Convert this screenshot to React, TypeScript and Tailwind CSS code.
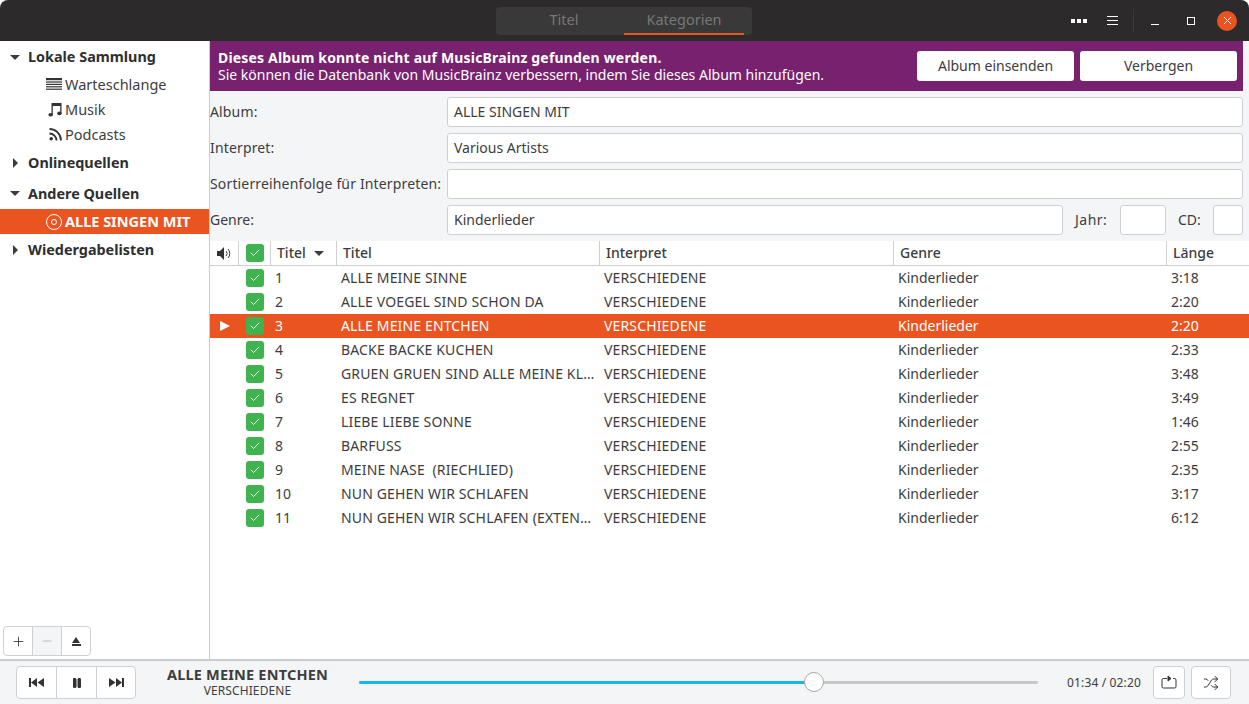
import { Check, Minus, Pause, Plus, Shuffle, X } from 'lucide-react';

const tracks = [
  ['1', 'ALLE MEINE SINNE', '3:18'],
  ['2', 'ALLE VOEGEL SIND SCHON DA', '2:20'],
  ['3', 'ALLE MEINE ENTCHEN', '2:20'],
  ['4', 'BACKE BACKE KUCHEN', '2:33'],
  ['5', 'GRUEN GRUEN SIND ALLE MEINE KL…', '3:48'],
  ['6', 'ES REGNET', '3:49'],
  ['7', 'LIEBE LIEBE SONNE', '1:46'],
  ['8', 'BARFUSS', '2:55'],
  ['9', 'MEINE NASE  (RIECHLIED)', '2:35'],
  ['10', 'NUN GEHEN WIR SCHLAFEN', '3:17'],
  ['11', 'NUN GEHEN WIR SCHLAFEN (EXTEN…', '6:12'],
];

const gridCols = 'grid grid-cols-[29px_32px_66px_263px_294px_273px_82px]';

function CheckBox() {
  return (
    <span className="flex h-[18px] w-[18px] items-center justify-center rounded-[3px] bg-[#3eb34f]">
      <Check className="h-3 w-3 text-white" strokeWidth={1.75} />
    </span>
  );
}

function Arrow({ open }: { open: boolean }) {
  return open ? (
    <span className="flex w-[28px] shrink-0 pl-[10px]">
      <span className="h-0 w-0 border-x-[5px] border-t-[5px] border-x-transparent border-t-[#3d3d3d]" />
    </span>
  ) : (
    <span className="flex w-[28px] shrink-0 pl-[13px]">
      <span className="h-0 w-0 border-y-[5px] border-l-[5.5px] border-y-transparent border-l-[#3d3d3d]" />
    </span>
  );
}

function SourceHead({ label, open, className }: { label: string; open: boolean; className: string }) {
  return (
    <div className={`flex items-center text-[14.4px] font-bold text-[#2f2f2f] ${className}`}>
      <Arrow open={open} />
      {label}
    </div>
  );
}

function SourceItem({ label, icon }: { label: string; icon: React.ReactNode }) {
  return (
    <div className="flex h-[25px] items-center text-[14.5px] text-[#3d3d3d]">
      <span className="flex w-[65px] shrink-0 justify-end pr-[3px]">{icon}</span>
      {label}
    </div>
  );
}

function Field({ label, value }: { label: string; value: string }) {
  return (
    <div className="flex h-[30px] items-center">
      <span className="w-[237px] shrink-0 whitespace-nowrap pb-[2px] tracking-[0.15px]">{label}</span>
      <div className="flex h-full flex-1 items-center rounded-[3px] border border-[#cdd1d6] bg-white px-[6px] pb-[2px]">{value}</div>
    </div>
  );
}

function HeadCell({ children, className = '' }: { children?: React.ReactNode; className?: string }) {
  return (
    <div className={`flex items-center border-r border-[#cdd1d6] font-medium text-[#3d3d3d] ${className}`}>
      {children}
    </div>
  );
}

function Transport({ children, className = '' }: { children: React.ReactNode; className?: string }) {
  return (
    <div className={`flex h-[33px] items-center justify-center border border-[#cdd1d6] bg-white text-[#333] ${className}`}>
      {children}
    </div>
  );
}

export default function App() {
  return (
    <div className="flex h-[704px] w-[1249px] flex-col overflow-hidden bg-white font-['Noto_Sans',sans-serif] text-[14px] text-[#3d3d3d]">
      {/* title bar */}
      <header className="relative flex h-[41px] shrink-0 items-center rounded-t-[8px] bg-[#2c2a2b] pl-[496px]">
        <div className="flex h-[28px] w-[256px] rounded-[4px] bg-[#393939] text-[14.5px] text-[#777]">
          <div className="flex w-[128px] items-center justify-center pl-[8px] pb-[2px]">Titel</div>
          <div className="flex w-[120px] items-center justify-center border-b-2 border-[#e95420]">Kategorien</div>
        </div>
        <div className="absolute right-[12px] top-0 flex h-full items-center text-white">
          <span className="flex gap-[2px]">
            <i className="h-[4px] w-[4px] bg-white" />
            <i className="h-[4px] w-[4px] bg-white" />
            <i className="h-[4px] w-[4px] bg-white" />
          </span>
          <span className="ml-[20px] flex w-[11px] flex-col gap-[3px]">
            <i className="h-px bg-white" />
            <i className="h-px bg-white" />
            <i className="h-px bg-white" />
          </span>
          <span className="ml-[15px] h-[24px] w-px bg-[#3b3a3a]" />
          <span className="ml-[17px] mt-[8px] h-px w-[8px] bg-white" />
          <span className="ml-[28px] h-[8px] w-[8px] border border-white" />
          <span className="ml-[22px] flex h-[20px] w-[20px] items-center justify-center rounded-full bg-[#e95420]">
            <X className="h-[13px] w-[13px]" strokeWidth={1.75} />
          </span>
        </div>
      </header>

      <div className="flex min-h-0 flex-1">
        {/* sources */}
        <aside className="flex w-[210px] shrink-0 flex-col border-r border-[#c8cbd0] bg-white pt-[4px]">
          <SourceHead label="Lokale Sammlung" open className="h-[24px]" />
          <div className="mt-[3px]">
            <SourceItem
              label="Warteschlange"
              icon={
                <svg width="16" height="13" viewBox="0 0 16 13" fill="#333">
                  <rect y="0" width="16" height="2.200" />
                  <rect y="3.400" width="16" height="1.200" />
                  <rect y="5.800" width="16" height="1.200" />
                  <rect y="8.200" width="16" height="1.200" />
                  <rect y="10.600" width="16" height="1.200" />
                </svg>
              }
            />
            <SourceItem
              label="Musik"
              icon={
                <svg width="14" height="15" viewBox="0 0 14 15" fill="#333">
                  <path d="M3.500 1h10v10.500h-1.300V4H4.800v9h-1.300zM3.500 1" />
                  <ellipse cx="2.700" cy="12.700" rx="2.300" ry="1.800" />
                  <ellipse cx="11.400" cy="11.400" rx="2.300" ry="1.800" />
                </svg>
              }
            />
            <SourceItem
              label="Podcasts"
              icon={
                <svg width="13" height="13" viewBox="0 0 13 13" fill="none" stroke="#333" strokeWidth="1.800">
                  <circle cx="2.200" cy="10.800" r="1.800" fill="#333" stroke="none" />
                  <path d="M0.500 5.500a7 7 0 0 1 7 7" />
                  <path d="M0.500 1a11.500 11.500 0 0 1 11.500 11.500" />
                </svg>
              }
            />
          </div>
          <SourceHead label="Onlinequellen" open={false} className="h-[31px]" />
          <SourceHead label="Andere Quellen" open className="h-[31px]" />
          <div className="flex h-[25px] items-center bg-[#e95420] text-[14.5px] font-bold text-white">
            <span className="flex w-[65px] shrink-0 justify-end pr-[3px]">
              <span className="flex h-[16px] w-[16px] items-center justify-center rounded-full border border-white">
                <span className="h-[6px] w-[6px] rounded-full border border-white" />
              </span>
            </span>
            ALLE SINGEN MIT
          </div>
          <SourceHead label="Wiedergabelisten" open={false} className="mt-[3px] h-[25px]" />
          <div className="mb-[3px] ml-[3px] mt-auto flex h-[30px] w-[88px] overflow-hidden rounded-[4px] border border-[#cdd1d6]">
            <div className="flex w-[29px] items-center justify-center border-r border-[#cdd1d6]">
              <Plus className="h-[15px] w-[15px] text-[#222]" strokeWidth={1.25} />
            </div>
            <div className="flex w-[29px] items-center justify-center border-r border-[#cdd1d6] bg-[#f4f5f7]">
              <Minus className="h-[14px] w-[14px] text-[#aaa]" strokeWidth={1.25} />
            </div>
            <div className="flex flex-1 flex-col items-center justify-center gap-[1px]">
              <span className="h-0 w-0 border-x-[4.5px] border-b-[6px] border-x-transparent border-b-[#333]" />
              <span className="h-[2px] w-[9px] bg-[#333]" />
            </div>
          </div>
        </aside>

        {/* album editor */}
        <main className="flex min-w-0 flex-1 flex-col bg-white">
          <div className="bg-[#f4f5f7]">
            <div className="mr-[6px] flex h-[50px] items-center justify-between bg-[#77216f] pl-[8px] pr-[6px] text-white">
              <div className="leading-[17px]">
                <p className="font-bold tracking-[0.18px]">Dieses Album konnte nicht auf MusicBrainz gefunden werden.</p>
                <p>Sie können die Datenbank von MusicBrainz verbessern, indem Sie dieses Album hinzufügen.</p>
              </div>
              <div className="flex gap-[6px] text-[#3d3d3d]">
                <div className="flex h-[30px] w-[157px] items-center justify-center rounded-[3px] bg-white pb-[2px]">Album einsenden</div>
                <div className="flex h-[30px] w-[157px] items-center justify-center rounded-[3px] bg-white pb-[2px]">Verbergen</div>
              </div>
            </div>
            <div className="flex flex-col gap-[6px] py-[6px] pr-[6px]">
              <Field label="Album:" value="ALLE SINGEN MIT" />
              <Field label="Interpret:" value="Various Artists" />
              <Field label="Sortierreihenfolge für Interpreten:" value="" />
              <div className="flex h-[30px] items-center">
                <span className="w-[237px] shrink-0 pb-[2px]">Genre:</span>
                <div className="flex h-full w-[616px] items-center rounded-[3px] border border-[#cdd1d6] bg-white px-[6px] pb-[2px]">Kinderlieder</div>
                <span className="ml-[12px] w-[45px] pb-[2px] tracking-[0.5px]">Jahr:</span>
                <div className="h-full w-[46px] rounded-[3px] border border-[#cdd1d6] bg-white" />
                <span className="ml-[12px] w-[35px] pb-[2px]">CD:</span>
                <div className="h-full w-[30px] rounded-[3px] border border-[#cdd1d6] bg-white" />
              </div>
            </div>
          </div>

          <div className={`${gridCols} h-[25px] shrink-0 border-b border-[#cdd1d6]`}>
            <HeadCell className="justify-center">
              <svg width="15" height="13" viewBox="0 0 15 13" fill="none" stroke="#333" strokeWidth="1">
                <path d="M0 4h3l4-4v13l-4-4H0z" fill="#333" stroke="none" />
                <path d="M9 4a3.500 3.500 0 0 1 0 5" />
                <path d="M11 2a6.500 6.500 0 0 1 0 9" />
              </svg>
            </HeadCell>
            <HeadCell className="justify-center">
              <CheckBox />
            </HeadCell>
            <HeadCell className="pl-[6px] pb-[2px]">
              Titel
              <span className="ml-[8px] mt-[3px] h-0 w-0 border-x-[5px] border-t-[5px] border-x-transparent border-t-[#3d3d3d]" />
            </HeadCell>
            <HeadCell className="pl-[6px] pb-[2px]">Titel</HeadCell>
            <HeadCell className="pl-[6px] pb-[2px]">Interpret</HeadCell>
            <HeadCell className="pl-[6px] pb-[2px]">Genre</HeadCell>
            <div className="flex items-center pb-[2px] pl-[6px] font-medium">Länge</div>
          </div>

          {tracks.map(([nr, title, length]) => {
            const playing = nr === '3';
            return (
              <div
                key={nr}
                className={`${gridCols} h-[24px] shrink-0 items-center ${playing ? 'bg-[#e95420] text-white' : 'text-[#3d3d3d]'}`}
              >
                <div className="flex justify-center">
                  {playing && <span className="h-0 w-0 border-y-[5.5px] border-l-[10px] border-y-transparent border-l-white" />}
                </div>
                <div className="flex justify-center">
                  <CheckBox />
                </div>
                <div className="pb-[2px] pl-[4px]">{nr}</div>
                <div className="overflow-hidden whitespace-pre pb-[2px] pl-[4px] tracking-[0.15px]">{title}</div>
                <div className="pb-[2px] pl-[4px] tracking-[0.15px]">VERSCHIEDENE</div>
                <div className="pb-[2px] pl-[4px]">Kinderlieder</div>
                <div className="pb-[2px] pl-[4px]">{length}</div>
              </div>
            );
          })}
        </main>
      </div>

      {/* player */}
      <footer className="flex h-[45px] shrink-0 items-center border-t-2 border-[#c8cbd0] bg-[#f4f5f7]">
        <div className="ml-[16px] flex w-[120px]">
          <Transport className="w-[41px] rounded-l-[4px]">
            <svg width="15" height="9" viewBox="0 0 15 9" fill="currentColor">
              <rect width="2" height="9" />
              <path d="M8 0v9L2 4.500zM15 0v9L8.500 4.500z" />
            </svg>
          </Transport>
          <Transport className="-ml-px w-[41px]">
            <Pause className="h-[12px] w-[12px] fill-[#333]" strokeWidth={2} />
          </Transport>
          <Transport className="-ml-px w-[40px] rounded-r-[4px]">
            <svg width="15" height="9" viewBox="0 0 15 9" fill="currentColor">
              <rect x="13" width="2" height="9" />
              <path d="M0 0v9l6.500-4.500zM7 0v9l6-4.500z" />
            </svg>
          </Transport>
        </div>
        <div className="ml-[16px] flex w-[191px] shrink-0 flex-col items-center leading-[16px]">
          <span className="pb-[1px] text-[14.5px] font-bold tracking-[0.2px]">ALLE MEINE ENTCHEN</span>
          <span className="text-[12px] tracking-[0.1px]">VERSCHIEDENE</span>
        </div>
        <div className="relative ml-[16px] h-[3px] w-[679px] rounded-full bg-[#c8c8c8]">
          <div className="h-full w-[455px] rounded-full bg-[#19b6ee]" />
          <div className="absolute left-[445px] top-[-9px] h-[20px] w-[20px] rounded-full border border-[#a9a9a9] bg-white" />
        </div>
        <span className="ml-[29px] whitespace-nowrap text-[12px] tracking-[0.15px]">01:34 / 02:20</span>
        <Transport className="ml-[12px] w-[32px] rounded-[4px]">
          <svg width="16" height="15" viewBox="0 0 16 15" fill="none" stroke="currentColor" strokeWidth="1">
            <path d="M6 3.500H2.500a1.500 1.500 0 0 0-1.500 1.500v6.500a1.500 1.500 0 0 0 1.500 1.500h11a1.500 1.500 0 0 0 1.500-1.500V5a1.500 1.500 0 0 0-1.500-1.500H12" />
            <path d="M7 1v5l3-2.500z" fill="currentColor" />
          </svg>
        </Transport>
        <Transport className="ml-[6px] w-[40px] rounded-[4px]">
          <Shuffle className="h-[16px] w-[16px]" strokeWidth={1.5} />
        </Transport>
      </footer>
    </div>
  );
}
